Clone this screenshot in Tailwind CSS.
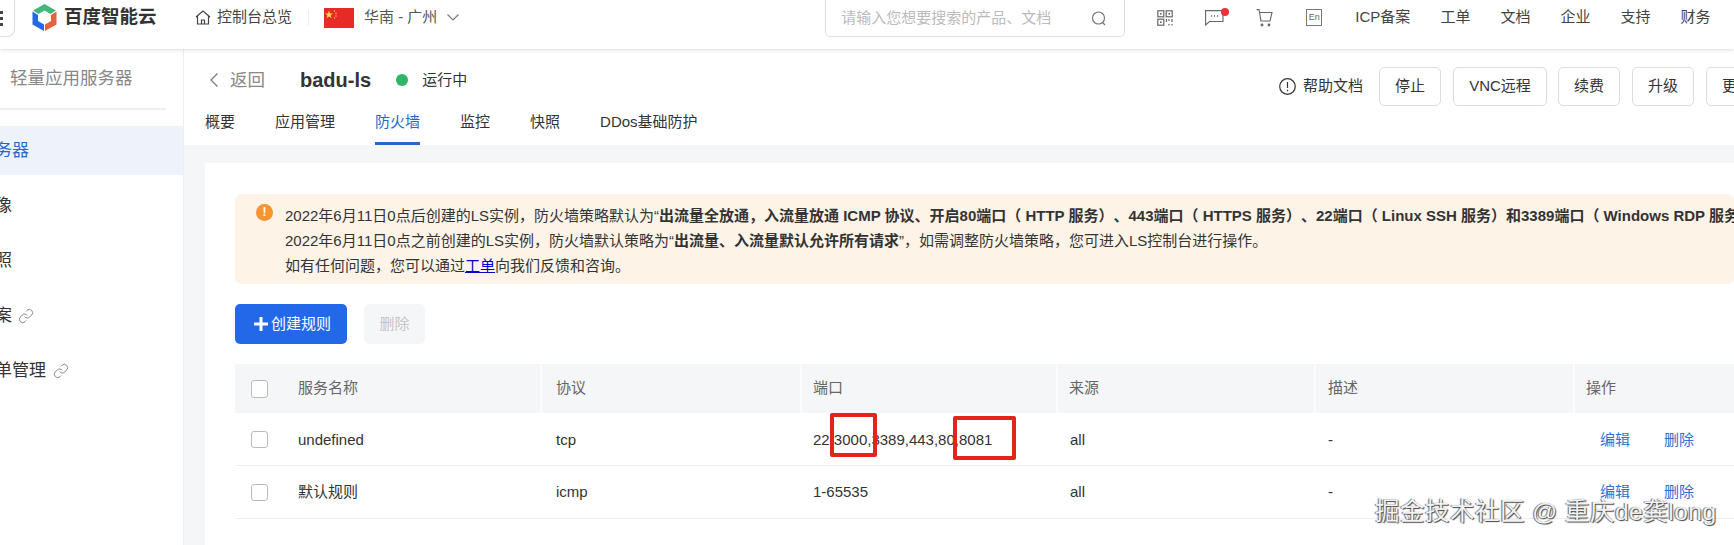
<!DOCTYPE html>
<html lang="zh-CN">
<head>
    <meta charset="UTF-8">
    <title>百度智能云 - 防火墙</title>
    <script src="https://cdn.jsdelivr.net/npm/@tailwindcss/browser@4"></script>
</head>
<body class="bg-white text-[#333] text-[15px] font-['Liberation_Sans','Noto_Sans_CJK_SC',sans-serif]">
<div class="relative w-[1734px] h-[545px] overflow-hidden flex flex-col">
    <!-- Top navigation -->
    <header class="relative z-10 h-[49px] shrink-0 bg-white shadow-[0_1px_4px_rgba(0,0,0,0.14)] flex items-start whitespace-nowrap">
        <div class="-ml-[25px] w-[40px] h-[37px] border border-t-0 border-[#ddd] rounded-b-lg flex flex-col items-end justify-center gap-[3px] pr-[11px]">
            <span class="w-[4px] h-[3px] bg-[#444]"></span>
            <span class="w-[4px] h-[3px] bg-[#444]"></span>
            <span class="w-[4px] h-[3px] bg-[#444]"></span>
        </div>
        <div class="ml-[17px] h-[37px] flex items-center">
            <svg class="w-[25px] h-[27px] -mt-[3px]" viewBox="0 0 25 27">
                <path d="M12.5 0 L24 6.5 L18.5 10 L12.5 6.5 L6.5 10 L1 6.5 Z" fill="#43b77a"/>
                <path d="M0.5 7.5 L6 11 L6 17 L12 20.5 L12 27 L0.5 20.5 Z" fill="#2468ea"/>
                <path d="M24.5 7.5 L19 11 L19 17 L13 20.5 L13 27 L24.5 20.5 Z" fill="#e8603c"/>
            </svg>
            <span class="ml-[7px] -mt-[3px] w-[93px] text-[18.5px] leading-none font-bold text-[#333]">百度智能云</span>
        </div>
        <div class="ml-[38px] h-[35px] flex items-center">
            <svg class="w-[16px] h-[15px]" viewBox="0 0 16 15" fill="none" stroke="#444" stroke-width="1.2">
                <path d="M1 7 L8 1 L15 7 M2.5 6 V14 H13.5 V6 M6.5 14 V10 H9.5 V14"/>
            </svg>
            <span class="ml-[6px] text-[15px] text-[#444]">控制台总览</span>
            <span class="ml-[16px] w-px h-[16px] bg-[#eee]"></span>
            <svg class="ml-[15px] w-[30px] h-[20px]" viewBox="0 0 30 20">
                <rect width="30" height="20" fill="#e62b26"/>
                <polygon points="5,2.5 6,5.5 9,5.5 6.6,7.3 7.5,10.2 5,8.4 2.5,10.2 3.4,7.3 1,5.5 4,5.5" fill="#f8d94a"/>
                <circle cx="10.5" cy="3" r="0.7" fill="#f8d94a"/>
                <circle cx="12" cy="5.5" r="0.7" fill="#f8d94a"/>
                <circle cx="12" cy="8" r="0.7" fill="#f8d94a"/>
                <circle cx="10.5" cy="10" r="0.7" fill="#f8d94a"/>
            </svg>
            <span class="ml-[10px] text-[15px] text-[#555]">华南 - 广州</span>
            <svg class="ml-[10px] w-[12px] h-[7px]" viewBox="0 0 12 7" fill="none" stroke="#777" stroke-width="1.1">
                <path d="M0.5 0.5 L6 6 L11.5 0.5"/>
            </svg>
        </div>
        <div class="ml-[366px] w-[300px] h-[37px] border border-t-0 border-[#ddd] rounded-b-[5px] flex items-center justify-between pl-[15px] pr-[17px]">
            <span class="text-[15px] text-[#bbb]">请输入您想要搜索的产品、文档</span>
            <svg class="w-[16px] h-[15px]" viewBox="0 0 16 15" fill="none" stroke="#777" stroke-width="1.2">
                <circle cx="7.5" cy="7" r="6"/>
                <path d="M11.5 11.5 L14 14"/>
            </svg>
        </div>
        <div class="ml-[32px] h-[35px] flex items-center text-[15px] text-[#444]">
            <svg class="w-[16px] h-[16px]" viewBox="0 0 16 16" fill="none" stroke="#666" stroke-width="1.2">
                <rect x="0.8" y="0.8" width="6" height="6"/>
                <rect x="9.2" y="0.8" width="6" height="6"/>
                <rect x="0.8" y="9.2" width="6" height="6"/>
                <rect x="3" y="3" width="1.6" height="1.6" fill="#666" stroke="none"/>
                <rect x="11.4" y="3" width="1.6" height="1.6" fill="#666" stroke="none"/>
                <rect x="3" y="11.4" width="1.6" height="1.6" fill="#666" stroke="none"/>
                <path d="M9.5 9 V12 M12 9 V11 M15 9 V12 M12 14 V15.5 M15 14 V15.5"/>
            </svg>
            <div class="relative ml-[32px] w-[19px] h-[16px]">
                <svg class="w-[19px] h-[16px]" viewBox="0 0 19 16" fill="none" stroke="#666" stroke-width="1.1">
                    <path d="M0.6 0.6 H18 V11.5 H4.5 L0.6 15 Z"/>
                    <path d="M6 6 H7.2 M9 6 H10.2 M12 6 H13.2" stroke-width="1.4"/>
                </svg>
                <span class="absolute -top-[2px] -right-[5px] w-[8px] h-[8px] rounded-full bg-[#e8323c]"></span>
            </div>
            <svg class="ml-[32px] w-[17px] h-[18px]" viewBox="0 0 17 18" fill="none" stroke="#666" stroke-width="1.1">
                <path d="M0.5 0.6 H3 L5 12 H14 L16 3.5 H3.5"/>
                <circle cx="6" cy="16" r="0.9" fill="#666"/>
                <circle cx="13" cy="16" r="0.9" fill="#666"/>
            </svg>
            <span class="ml-[33px] w-[16px] h-[17px] border border-[#777] text-[9px] leading-[15px] text-center text-[#666]">En</span>
            <span class="ml-[33px] -mt-[1px]">ICP备案</span>
            <span class="ml-[30px] -mt-[1px]">工单</span>
            <span class="ml-[30px] -mt-[1px]">文档</span>
            <span class="ml-[30px] -mt-[1px]">企业</span>
            <span class="ml-[30px] -mt-[1px]">支持</span>
            <span class="ml-[30px] -mt-[1px]">财务</span>
        </div>
    </header>

    <div class="flex flex-1 min-h-0">
        <!-- Sidebar -->
        <aside class="w-[184px] shrink-0 bg-white border-r border-[#eee] overflow-hidden whitespace-nowrap text-[17px]">
            <div class="h-[59px] pt-[17px] pl-[10px] text-[#888] text-[17.5px] leading-[24px]">轻量应用服务器</div>
            <div class="w-[166px] h-[2px] bg-[#f0f0f0]"></div>
            <div class="mt-[16px] h-[49px] bg-[#edf2fb] text-[#2468cc] flex items-center -indent-[22px]">服务器</div>
            <div class="mt-[3px] h-[55px] flex items-center -indent-[22px]">镜像</div>
            <div class="h-[55px] flex items-center -indent-[22px]">快照</div>
            <div class="h-[55px] flex items-center -indent-[22px]">
                备案
                <svg class="ml-[6px] w-[16px] h-[16px]" viewBox="0 0 24 24" fill="none" stroke="#888" stroke-width="1.5"><path d="M10 13a5 5 0 0 0 7.54.54l3-3a5 5 0 0 0-7.07-7.07l-1.72 1.71"/><path d="M14 11a5 5 0 0 0-7.54-.54l-3 3a5 5 0 0 0 7.07 7.07l1.71-1.71"/></svg>
            </div>
            <div class="h-[55px] flex items-center -indent-[22px]">
                订单管理
                <svg class="ml-[7px] w-[16px] h-[16px]" viewBox="0 0 24 24" fill="none" stroke="#888" stroke-width="1.5"><path d="M10 13a5 5 0 0 0 7.54.54l3-3a5 5 0 0 0-7.07-7.07l-1.72 1.71"/><path d="M14 11a5 5 0 0 0-7.54-.54l-3 3a5 5 0 0 0 7.07 7.07l1.71-1.71"/></svg>
            </div>
        </aside>

        <main class="flex-1 min-w-0 bg-[#f5f6f8] overflow-hidden">
            <!-- Instance header and tabs -->
            <section class="h-[96px] bg-white whitespace-nowrap">
                <div class="h-[50px] flex items-start justify-between">
                    <div class="ml-[26px] mt-[19px] h-[24px] flex items-center">
                        <svg class="w-[8px] h-[14px]" viewBox="0 0 8 14" fill="none" stroke="#777" stroke-width="1.2"><path d="M7.5 0.5 L1 7 L7.5 13.5"/></svg>
                        <span class="ml-[12px] text-[17.5px] text-[#888]">返回</span>
                        <span class="ml-[35px] text-[20px] font-bold text-[#333]">badu-ls</span>
                        <span class="ml-[25px] w-[12px] h-[12px] rounded-full bg-[#2fb566]"></span>
                        <span class="ml-[14px] text-[15px]">运行中</span>
                    </div>
                    <div class="mt-[18px] -mr-[63px] flex items-center">
                        <svg class="w-[17px] h-[17px]" viewBox="0 0 17 17" fill="none" stroke="#333" stroke-width="1.2"><circle cx="8.5" cy="8.5" r="7.8"/><path d="M8.5 4 V10 M8.5 11.8 V13.2"/></svg>
                        <span class="ml-[7px] mr-[16px]">帮助文档</span>
                        <span class="w-[62px] h-[39px] border border-[#ddd] rounded-[5px] flex items-center justify-center">停止</span>
                        <span class="ml-[12px] w-[94px] h-[39px] border border-[#ddd] rounded-[5px] flex items-center justify-center">VNC远程</span>
                        <span class="ml-[11px] w-[62px] h-[39px] border border-[#ddd] rounded-[5px] flex items-center justify-center">续费</span>
                        <span class="ml-[12px] w-[62px] h-[39px] border border-[#ddd] rounded-[5px] flex items-center justify-center">升级</span>
                        <span class="ml-[12px] w-[91px] h-[39px] border border-[#ddd] rounded-[5px] flex items-center pl-[15px]">更多操作</span>
                    </div>
                </div>
                <nav class="h-[46px] pl-[21px] flex gap-[40px] text-[15px] text-[#333]">
                    <span class="h-full flex items-center">概要</span>
                    <span class="h-full flex items-center">应用管理</span>
                    <span class="h-full flex items-center text-[#2468cc] border-b-[3px] border-[#2468cc] pt-[3px]">防火墙</span>
                    <span class="h-full flex items-center">监控</span>
                    <span class="h-full flex items-center">快照</span>
                    <span class="h-full flex items-center">DDos基础防护</span>
                </nav>
            </section>

            <!-- Firewall card -->
            <section class="mt-[18px] ml-[21px] w-[1529px] h-[400px] bg-white pt-[31px] pl-[30px] whitespace-nowrap">
                <div class="h-[90px] rounded-[6px] bg-[#fef3e7] pl-[21px] pt-[9px] flex overflow-hidden">
                    <span class="mt-[1px] w-[17px] h-[17px] shrink-0 rounded-full bg-[#f7942e] text-white text-[12px] leading-[17px] text-center font-bold">!</span>
                    <div class="ml-[12px] leading-[25px] [text-spacing-trim:space-all]">
                        <p>2022年6月11日0点后创建的LS实例，防火墙策略默认为“<b>出流量全放通，入流量放通 ICMP 协议、开启80端口（ HTTP 服务）、443端口（ HTTPS 服务）、22端口（ Linux SSH 服务）和3389端口（ Windows RDP 服务）</b></p>
                        <p>2022年6月11日0点之前创建的LS实例，防火墙默认策略为“<b>出流量、入流量默认允许所有请求</b>”，如需调整防火墙策略，您可进入LS控制台进行操作。</p>
                        <p>如有任何问题，您可以通过<a href="#" class="text-[#0000c8] underline">工单</a>向我们反馈和咨询。</p>
                    </div>
                </div>
                <div class="mt-[20px] flex gap-[17px]">
                    <button class="w-[112px] h-[40px] pl-[19px] rounded-[5px] bg-[#2468ea] text-white flex items-center">
                        <svg class="w-[14px] h-[14px] mr-[3px]" viewBox="0 0 14 14" fill="#fff"><path d="M5.5 0 H8.5 V5.5 H14 V8.5 H8.5 V14 H5.5 V8.5 H0 V5.5 H5.5 Z"/></svg>
                        创建规则
                    </button>
                    <button class="w-[61px] h-[40px] rounded-[5px] bg-[#f5f6f8] text-[#c4c4c4]">删除</button>
                </div>

                <div class="relative mt-[20px]">
                    <table class="table-fixed w-[1499px] text-left">
                        <colgroup>
                            <col class="w-[306px]"><col class="w-[260px]"><col class="w-[256px]"><col class="w-[258px]"><col class="w-[259px]"><col class="w-[160px]">
                        </colgroup>
                        <thead class="bg-[#f5f6f8] text-[#666]">
                            <tr class="h-[49px]">
                                <th class="font-normal pl-[16px]"><div class="flex items-center"><span class="w-[17px] h-[18px] border border-[#bbb] rounded-[3px] bg-white"></span><span class="ml-[30px]">服务名称</span></div></th>
                                <th class="font-normal pl-[14px] border-l-2 border-white/70">协议</th>
                                <th class="font-normal pl-[11px] border-l-2 border-white/70">端口</th>
                                <th class="font-normal pl-[11px] border-l-2 border-white/70">来源</th>
                                <th class="font-normal pl-[12px] border-l-2 border-white/70">描述</th>
                                <th class="font-normal pl-[11px] border-l-2 border-white/70">操作</th>
                            </tr>
                        </thead>
                        <tbody>
                            <tr class="h-[52px] border-b border-[#eee] [&>td]:pt-[2px]">
                                <td class="pl-[16px]"><div class="flex items-center"><span class="w-[17px] h-[17px] border border-[#bbb] rounded-[3px]"></span><span class="ml-[30px]">undefined</span></div></td>
                                <td class="pl-[15px]">tcp</td>
                                <td class="pl-[12px]">22,3000,3389,443,80,8081</td>
                                <td class="pl-[13px]">all</td>
                                <td class="pl-[13px]">-</td>
                                <td class="pl-[26px] text-[#2f6fd0]"><span>编辑</span><span class="ml-[34px]">删除</span></td>
                            </tr>
                            <tr class="h-[53px] border-b border-[#eee] [&>td]:pt-[2px]">
                                <td class="pl-[16px]"><div class="flex items-center"><span class="w-[17px] h-[17px] border border-[#bbb] rounded-[3px]"></span><span class="ml-[30px]">默认规则</span></div></td>
                                <td class="pl-[15px]">icmp</td>
                                <td class="pl-[12px]">1-65535</td>
                                <td class="pl-[13px]">all</td>
                                <td class="pl-[13px]">-</td>
                                <td class="pl-[26px] text-[#2f6fd0]"><span>编辑</span><span class="ml-[34px]">删除</span></td>
                            </tr>
                        </tbody>
                    </table>
                    <!-- Annotations drawn over the port column -->
                    <span class="absolute left-[595px] top-[49px] w-[47px] h-[44px] border-[4px] border-[#e1251b] rounded-[2px]"></span>
                    <span class="absolute left-[718px] top-[52px] w-[63px] h-[44px] border-[4px] border-[#e1251b] rounded-[2px]"></span>
                </div>
            </section>
        </main>
    </div>

    <!-- Watermark -->
    <div class="absolute left-[1375px] top-[496px] text-[24.5px] tracking-[0.5px] leading-[32px] whitespace-nowrap text-[#f2f2f2] [text-shadow:1px_1px_1px_#444,-1px_0_1px_#666]">掘金技术社区 @ 重庆de龚long</div>
</div>
</body>
</html>
